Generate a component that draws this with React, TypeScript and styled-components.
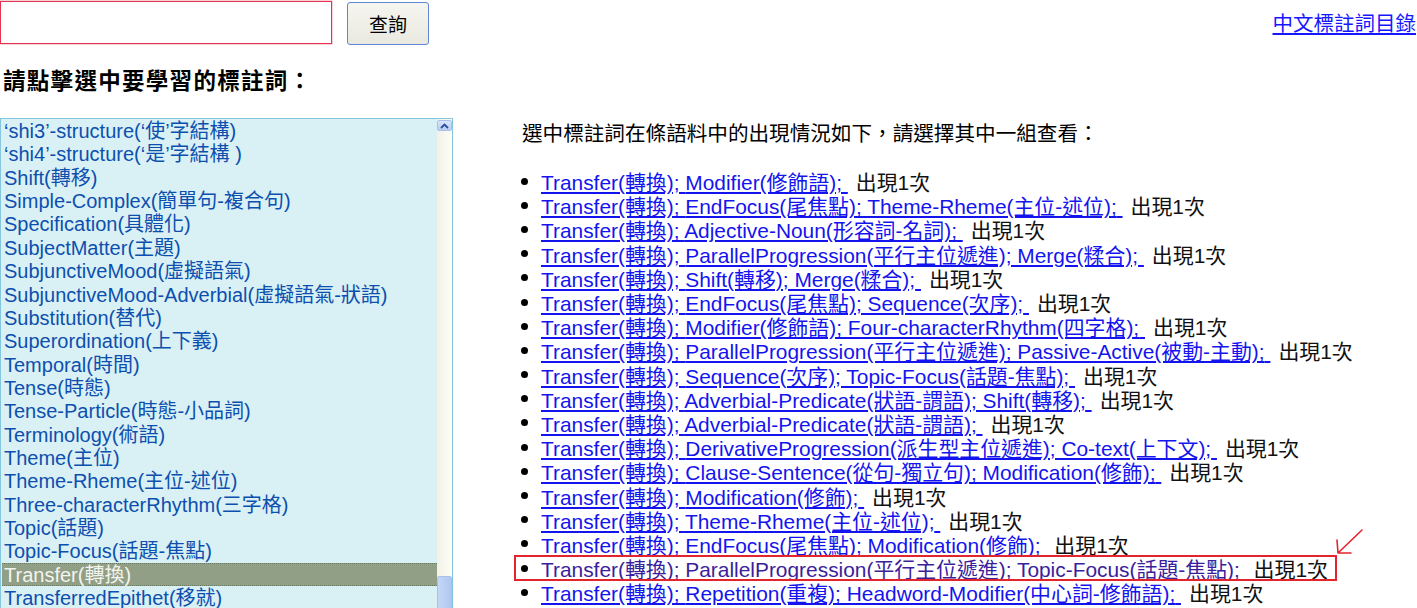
import React from "react";
import styled, { createGlobalStyle } from "styled-components";

const tags = [
  "‘shi3’-structure(‘使’字結構)",
  "‘shi4’-structure(‘是’字結構 )",
  "Shift(轉移)",
  "Simple-Complex(簡單句-複合句)",
  "Specification(具體化)",
  "SubjectMatter(主題)",
  "SubjunctiveMood(虛擬語氣)",
  "SubjunctiveMood-Adverbial(虛擬語氣-狀語)",
  "Substitution(替代)",
  "Superordination(上下義)",
  "Temporal(時間)",
  "Tense(時態)",
  "Tense-Particle(時態-小品詞)",
  "Terminology(術語)",
  "Theme(主位)",
  "Theme-Rheme(主位-述位)",
  "Three-characterRhythm(三字格)",
  "Topic(話題)",
  "Topic-Focus(話題-焦點)",
  "Transfer(轉換)",
  "TransferredEpithet(移就)",
];

const selectedTag = "Transfer(轉換)";

const groups = [
  "Modifier(修飾語);",
  "EndFocus(尾焦點); Theme-Rheme(主位-述位);",
  "Adjective-Noun(形容詞-名詞);",
  "ParallelProgression(平行主位遞進); Merge(糅合);",
  "Shift(轉移); Merge(糅合);",
  "EndFocus(尾焦點); Sequence(次序);",
  "Modifier(修飾語); Four-characterRhythm(四字格);",
  "ParallelProgression(平行主位遞進); Passive-Active(被動-主動);",
  "Sequence(次序); Topic-Focus(話題-焦點);",
  "Adverbial-Predicate(狀語-謂語); Shift(轉移);",
  "Adverbial-Predicate(狀語-謂語);",
  "DerivativeProgression(派生型主位遞進); Co-text(上下文);",
  "Clause-Sentence(從句-獨立句); Modification(修飾);",
  "Modification(修飾);",
  "Theme-Rheme(主位-述位);",
  "EndFocus(尾焦點); Modification(修飾);",
  "ParallelProgression(平行主位遞進); Topic-Focus(話題-焦點);",
  "Repetition(重複); Headword-Modifier(中心詞-修飾語);",
];

const markedIndex = 16;

const GlobalStyle = createGlobalStyle`
  html, body {
    margin: 0;
    padding: 0;
    background: #fff;
    overflow: hidden;
  }
  body {
    font-family: "Liberation Sans", Arial, "Noto Sans CJK TC", sans-serif;
    color: #000;
  }
`;

const Page = styled.div`
  width: 1417px;
  height: 608px;
  overflow: hidden;
`;

const TopBar = styled.div`
  display: flex;
  align-items: center;
  height: 44px;
`;

const SearchInput = styled.input`
  appearance: none;
  box-sizing: border-box;
  width: 332px;
  height: 43px;
  margin: 1px 0 0;
  border: 1px solid #e3334f;
  box-shadow: 0 0 0 0.5px rgba(227, 51, 79, 0.45);
  outline: none;
  background: #fff;
`;

const SearchButton = styled.button`
  box-sizing: border-box;
  width: 82px;
  height: 43px;
  margin-left: 15px;
  margin-top: 2px;
  border: 1px solid #5f86d6;
  border-radius: 3px;
  background: linear-gradient(#f6f6f0, #e9e9e0);
  font-family: "Noto Sans CJK TC", sans-serif;
  font-size: 19px;
  color: #000;
`;

const CatalogLink = styled.a`
  margin-left: auto;
  margin-right: 1px;
  font-family: "Noto Sans CJK TC", sans-serif;
  font-size: 20.5px;
  color: #1616ff;
  text-decoration: underline;
`;

const Heading = styled.h3`
  margin: 21px 0 0 3px;
  height: 28px;
  line-height: 28px;
  font-family: "Noto Sans CJK TC", sans-serif;
  font-size: 22.5px;
  font-weight: 700;
  letter-spacing: 1.3px;
`;

const Main = styled.div`
  display: flex;
  align-items: flex-start;
  margin-top: 25px;
`;

const ListBox = styled.div`
  box-sizing: border-box;
  display: flex;
  width: 453px;
  height: 500px;
  border: 1px solid #84c6de;
  background: #d9f1f5;
  overflow: hidden;
`;

const Options = styled.div`
  flex: 1;
  padding: 0 0 0 1px;
`;

const Option = styled.div<{ $selected?: boolean }>`
  box-sizing: border-box;
  height: 23.37px;
  line-height: 23.37px;
  padding-left: 2px;
  font-size: 20px;
  white-space: nowrap;
  color: ${(p) => (p.$selected ? "#f4f4ee" : "#0d4fae")};
  background: ${(p) => (p.$selected ? "#919f86" : "transparent")};
  border: 1px dotted ${(p) => (p.$selected ? "#6d7a62" : "transparent")};
  border-left: none;
  border-right: none;
`;

const ScrollBar = styled.div`
  display: flex;
  flex-direction: column;
  width: 15px;
  background: linear-gradient(90deg, #f2f1e6, #fdfdf8);
`;

const ScrollArrow = styled.div`
  box-sizing: border-box;
  width: 15px;
  height: 16px;
  margin-top: 1px;
  border: 1px solid #a9c0ea;
  border-radius: 2px;
  background: linear-gradient(#dbe6fa, #b9cdf3);
  display: flex;
  align-items: center;
  justify-content: center;
`;

const ScrollThumb = styled.div`
  box-sizing: border-box;
  width: 15px;
  height: 60px;
  margin-top: 445px;
  border: 1px solid #a9c0ea;
  border-radius: 2px;
  background: linear-gradient(90deg, #c4d6f6, #b0c8f0);
`;

const Results = styled.div`
  margin-left: 62px;
  padding-top: 2px;
`;

const Intro = styled.p`
  margin: 0 0 0 7px;
  line-height: 24px;
  font-family: "Noto Sans CJK TC", sans-serif;
  font-size: 20.6px;
`;

const GroupList = styled.ul`
  list-style: none;
  margin: 25px 0 0;
  padding: 0;
`;

const GroupItem = styled.li<{ $marked?: boolean }>`
  position: relative;
  display: flex;
  align-items: center;
  width: fit-content;
  height: 24.2px;
  padding-right: ${(p) => (p.$marked ? "8px" : "0")};
  font-size: 20.9px;
  white-space: nowrap;
  outline: ${(p) => (p.$marked ? "2px solid #e4242c" : "none")};
  outline-offset: -1px;
`;

const Bullet = styled.span`
  display: flex;
  width: 26px;
  &::before {
    content: "";
    width: 7px;
    height: 7px;
    margin-left: 6px;
    border-radius: 50%;
    background: #000;
  }
`;

const GroupLink = styled.a<{ $visited?: boolean }>`
  color: ${(p) => (p.$visited ? "#3a1e9c" : "#1414ee")};
  text-decoration: underline;
`;

const Count = styled.span`
  margin-left: 8px;
  color: #111;
`;

const Arrow = styled.svg`
  position: absolute;
  left: calc(100% - 3px);
  top: -29px;
  width: 32px;
  height: 30px;
`;

export default function App() {
  return (
    <Page>
      <GlobalStyle />
      <TopBar>
        <SearchInput type="text" />
        <SearchButton>查詢</SearchButton>
        <CatalogLink href="#">中文標註詞目錄</CatalogLink>
      </TopBar>
      <Heading>請點擊選中要學習的標註詞：</Heading>
      <Main>
        <ListBox>
          <Options>
            {tags.map((t) => (
              <Option key={t} $selected={t === selectedTag}>
                {t}
              </Option>
            ))}
          </Options>
          <ScrollBar>
            <ScrollArrow>
              <svg width="9" height="6" viewBox="0 0 9 6">
                <path d="M1 5 L4.5 1.5 L8 5" fill="none" stroke="#2a4f9a" strokeWidth="1.8" />
              </svg>
            </ScrollArrow>
            <ScrollThumb />
          </ScrollBar>
        </ListBox>
        <Results>
          <Intro>選中標註詞在條語料中的出現情況如下，請選擇其中一組查看：</Intro>
          <GroupList>
            {groups.map((g, i) => (
              <GroupItem key={i} $marked={i === markedIndex}>
                <Bullet />
                <GroupLink href="#" $visited={i === markedIndex}>
                  Transfer(轉換); {g}&nbsp;
                </GroupLink>
                <Count>出現1次</Count>
                {i === markedIndex && (
                  <Arrow viewBox="0 0 32 30">
                    <path
                      d="M29 3 L5 26 M4 13 L5 26 L18 26"
                      fill="none"
                      stroke="#e4242c"
                      strokeWidth="1.6"
                      strokeLinecap="round"
                      strokeLinejoin="round"
                    />
                  </Arrow>
                )}
              </GroupItem>
            ))}
          </GroupList>
        </Results>
      </Main>
    </Page>
  );
}
